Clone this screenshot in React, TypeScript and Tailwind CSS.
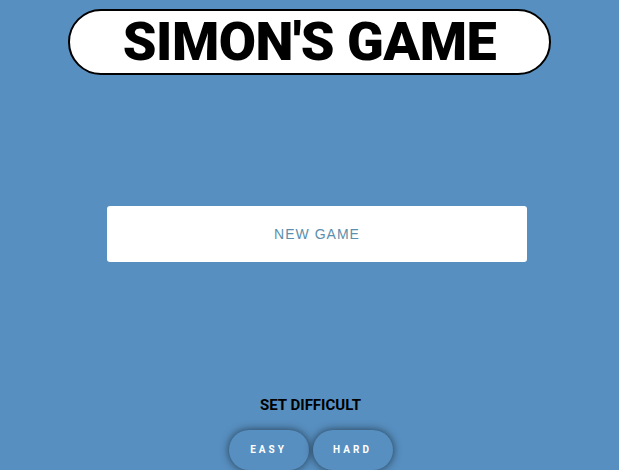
const App = () => {
  return (
    <div className="min-h-[470px] w-full bg-[#578fc0] flex flex-col items-center font-['Roboto',sans-serif]">
      <div className="mt-[9px] w-[483px] h-[66px] bg-white border-2 border-black rounded-full flex items-center justify-center">
        <h1 className="text-[54px] leading-none font-black text-black font-['Roboto',sans-serif] tracking-[-0.5px]">
          SIMON'S GAME
        </h1>
      </div>
      <button className="mt-[131px] ml-[15px] w-[420px] h-[56px] bg-white rounded-[3px] text-[14px] tracking-[1px] text-[#5b8fac] font-['Liberation_Sans',sans-serif]">
        NEW GAME
      </button>
      <div className="mt-[132px] text-[15px] font-bold text-black ml-[2px]">SET DIFFICULT</div>
      <div className="mt-[13px] flex gap-[4px] ml-[2px]">
        <button className="w-[80px] h-[40px] rounded-full bg-[#578fc0] text-white text-[10px] font-bold tracking-[3px] shadow-[0_0_8px_rgba(0,0,0,0.6)]">
          EASY
        </button>
        <button className="w-[80px] h-[40px] rounded-full bg-[#578fc0] text-white text-[10px] font-bold tracking-[3px] shadow-[0_0_8px_rgba(0,0,0,0.6)]">
          HARD
        </button>
      </div>
    </div>
  );
};

export default App;
